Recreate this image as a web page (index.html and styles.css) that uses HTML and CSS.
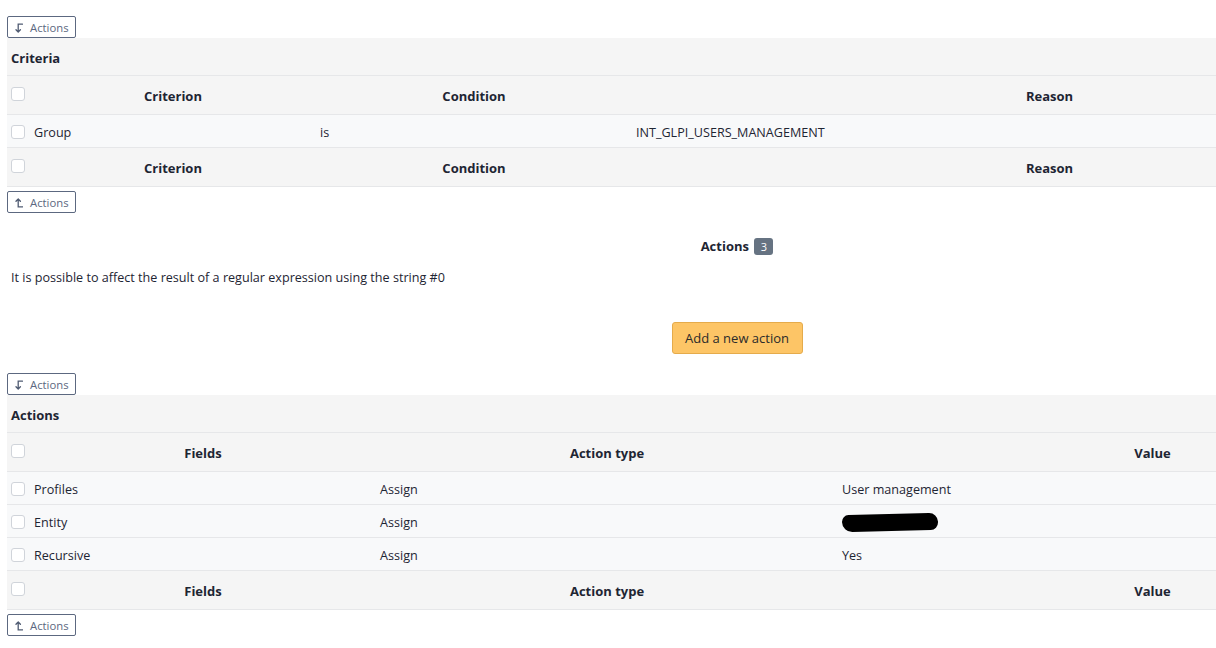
FILE: index.html
```html
<!DOCTYPE html>
<html>
<head>
<meta charset="utf-8">
<link rel="stylesheet" href="styles.css">
</head>
<body>
<div class="page">
  <button class="mass-btn" type="button">
    <svg class="ico" viewBox="0 0 8 10" width="8" height="10"><path d="M7.5 1.2H3.2V9M1 6.8L3.2 9L5.4 6.8"/></svg>
    Actions
  </button>
  <table class="grid crit">
    <colgroup><col class="c-chk"><col class="c-a1"><col class="c-b1"><col class="c-c1"></colgroup>
    <tr class="title"><th colspan="4">Criteria</th></tr>
    <tr class="head"><th><span class="chk"></span></th><th>Criterion</th><th>Condition</th><th>Reason</th></tr>
    <tr class="data"><td><span class="chk"></span></td><td>Group</td><td>is</td><td>INT_GLPI_USERS_MANAGEMENT</td></tr>
    <tr class="head"><th><span class="chk"></span></th><th>Criterion</th><th>Condition</th><th>Reason</th></tr>
  </table>
  <button class="mass-btn after" type="button">
    <svg class="ico" viewBox="0 0 8 10" width="8" height="10"><path d="M7.5 8.8H3.2V1M1 3.2L3.2 1L5.4 3.2"/></svg>
    Actions
  </button>

  <div class="section-title">Actions <span class="badge">3</span></div>
  <p class="note">It is possible to affect the result of a regular expression using the string #0</p>
  <div class="add-wrap"><button class="add-btn" type="button">Add a new action</button></div>

  <button class="mass-btn" type="button">
    <svg class="ico" viewBox="0 0 8 10" width="8" height="10"><path d="M7.5 1.2H3.2V9M1 6.8L3.2 9L5.4 6.8"/></svg>
    Actions
  </button>
  <table class="grid act">
    <colgroup><col class="c-chk"><col class="c-a2"><col class="c-b2"><col class="c-c2"></colgroup>
    <tr class="title"><th colspan="4">Actions</th></tr>
    <tr class="head"><th><span class="chk"></span></th><th>Fields</th><th>Action type</th><th>Value</th></tr>
    <tr class="data"><td><span class="chk"></span></td><td>Profiles</td><td>Assign</td><td>User management</td></tr>
    <tr class="data"><td><span class="chk"></span></td><td>Entity</td><td>Assign</td><td><span class="redact"></span></td></tr>
    <tr class="data"><td><span class="chk"></span></td><td>Recursive</td><td>Assign</td><td>Yes</td></tr>
    <tr class="head"><th><span class="chk"></span></th><th>Fields</th><th>Action type</th><th>Value</th></tr>
  </table>
  <button class="mass-btn after" type="button">
    <svg class="ico" viewBox="0 0 8 10" width="8" height="10"><path d="M7.5 8.8H3.2V1M1 3.2L3.2 1L5.4 3.2"/></svg>
    Actions
  </button>
</div>
</body>
</html>
```
FILE: styles.css
```css
html, body {
  margin: 0;
  padding: 0;
  background: #ffffff;
  overflow: hidden;
}
body {
  font-family: "Segoe UI", "Open Sans", "Noto Sans", sans-serif;
  font-size: 12.6px;
  color: #1e2533;
}
.page {
  width: 1460px;
  margin-left: 7px;
  padding-top: 16px;
}
.mass-btn {
  display: flex;
  align-items: center;
  gap: 7px;
  width: 69px;
  height: 22px;
  padding: 0 0 0 7px;
  border: 1px solid #5c6880;
  border-radius: 2px;
  background: #fff;
  color: #5c6880;
  font-family: inherit;
  font-size: 11.3px;
  box-sizing: border-box;
}
.mass-btn.after { margin-top: 4px; }
.ico {
  fill: none;
  stroke: #4f5b72;
  stroke-width: 1.3;
  stroke-linecap: round;
  stroke-linejoin: miter;
  margin-top: 1px;
}
.grid {
  width: 1460px;
  border-collapse: collapse;
  table-layout: fixed;
}
.c-chk { width: 23px; }
.c-a1 { width: 286px; }
.c-b1 { width: 316px; }
.c-a2 { width: 346px; }
.c-b2 { width: 462px; }
.grid th, .grid td {
  border-bottom: 1px solid #e6e7e9;
  text-align: left;
  vertical-align: middle;
  padding: 2px 4px 0;
}
.title th {
  background: #f5f5f5;
  height: 35px;
  font-weight: 700;
  font-size: 13px;
}
.head th {
  background: #f5f5f5;
  height: 36px;
  font-weight: 700;
  font-size: 13px;
  text-align: center;
}
.head th:first-child { text-align: left; }
.data td {
  background: #f8f9fa;
  height: 30px;
}
.chk {
  display: block;
  width: 14px;
  height: 14px;
  border: 1px solid #d0d4da;
  border-radius: 3px;
  background: #fff;
  box-sizing: border-box;
}
.head .chk { margin-top: -4px; }
.data .chk { margin-top: -1px; }
.redact {
  display: block;
  width: 96px;
  height: 17px;
  margin-top: 1px;
  background: #000;
  border-radius: 9px 12px 10px 14px;
  transform: rotate(-1.5deg);
}
.section-title {
  text-align: center;
  font-weight: 700;
  font-size: 13px;
  margin-top: 24px;
  height: 18px;
  line-height: 18px;
}
.badge {
  display: inline-block;
  background: #667382;
  color: #fff;
  font-weight: 400;
  font-size: 11px;
  border-radius: 3px;
  min-width: 19px;
  height: 17px;
  line-height: 17px;
  text-align: center;
  margin-left: 2px;
}
.note {
  margin: 14px 0 0 4px;
  line-height: 18px;
}
.add-wrap {
  display: flex;
  justify-content: center;
  margin-top: 35px;
}
.add-btn {
  width: 131px;
  height: 32px;
  background: #fdc566;
  border: 1px solid #e5ab4b;
  border-radius: 3px;
  font-family: inherit;
  font-size: 13px;
  color: #2b2b2b;
  box-sizing: border-box;
}
.add-wrap + .mass-btn { margin-top: 19px; }
```
